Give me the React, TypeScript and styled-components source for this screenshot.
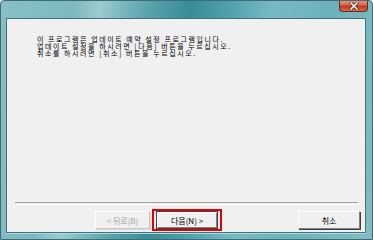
import React from "react";
import styled, { createGlobalStyle } from "styled-components";

const GlobalStyle = createGlobalStyle`
  html, body {
    margin: 0;
    padding: 0;
    background: #ffffff;
  }
`;

const Window = styled.div`
  width: 373px;
  height: 240px;
  box-sizing: border-box;
  display: flex;
  flex-direction: column;
  border: 1px solid #3f6c73;
  border-radius: 4px 4px 0 0;
  background: linear-gradient(
    100deg,
    #86c0c6 0%,
    #7db9c0 18%,
    #9ccbd0 24%,
    #5aa3ad 36%,
    #368c98 46%,
    #4d9fab 55%,
    #78bac3 66%,
    #6cb1ba 80%,
    #82bdc3 100%
  );
  overflow: hidden;
`;

const TitleBar = styled.div`
  height: 17px;
  display: flex;
  justify-content: flex-end;
  align-items: flex-start;
  padding-right: 4px;
`;

const CloseButton = styled.div`
  width: 29px;
  height: 12px;
  margin-top: -1px;
  box-sizing: border-box;
  border: 1px solid #6b2a1c;
  border-top: none;
  border-radius: 0 0 4px 4px;
  background: linear-gradient(#e9a08c 0%, #d8664a 45%, #c0381c 55%, #d86a48 100%);
  display: flex;
  align-items: center;
  justify-content: center;
`;

const Frame = styled.div`
  flex: 1;
  display: flex;
  padding: 0 6px 6px 5px;
`;

const Client = styled.div`
  flex: 1;
  display: flex;
  flex-direction: column;
  background: #f0f0f0;
  border: 1px solid #42727a;
  box-shadow: 0 1px 0 #a8dce2;
`;

const Message = styled.div`
  flex: 1;
  padding: 17px 0 0 30px;
  font-family: "Noto Sans CJK KR", "Liberation Sans", sans-serif;
  font-size: 7px;
  line-height: 7px;
  letter-spacing: 1.55px;
  color: #000000;
`;

const Line = styled.div`
  white-space: nowrap;
`;

const Separator = styled.div`
  margin: 0 7px 0 8px;
  height: 1px;
  border-top: 1px solid #a0a0a0;
  border-bottom: 1px solid #ffffff;
`;

const ButtonRow = styled.div`
  display: flex;
  justify-content: flex-end;
  align-items: center;
  gap: 2px;
  padding: 4px 5px 0 0;
  height: 22px;
  margin-bottom: 1px;
`;

const Button = styled.div<{ $disabled?: boolean; $default?: boolean; $width?: number }>`
  width: ${(p) => p.$width ?? 62}px;
  height: 18px;
  box-sizing: border-box;
  display: flex;
  align-items: center;
  justify-content: center;
  font-family: "Noto Sans CJK KR", "Liberation Sans", sans-serif;
  font-size: 8px;
  color: ${(p) => (p.$disabled ? "#a3a3a3" : "#000000")};
  background: #f0f0f0;
  border: 1px solid;
  border-color: ${(p) =>
    p.$disabled
      ? "#ffffff #c8c8c8 #c8c8c8 #ffffff"
      : p.$default
      ? "#404040 #404040 #404040 #404040"
      : "#ffffff #808080 #808080 #ffffff"};
  box-shadow: ${(p) =>
    p.$disabled
      ? "1px 1px 0 #d8d8d8"
      : p.$default
      ? "inset 1px 1px 0 #ffffff, inset -1px -1px 0 #808080"
      : "1px 1px 0 #404040"};
`;

const Highlight = styled.div`
  border: 2px solid #e60000;
  padding: 0 2px;
  display: flex;
`;

const CancelSlot = styled.div`
  margin-left: 74px;
  display: flex;
`;

export default function App() {
  return (
    <>
      <GlobalStyle />
      <Window>
        <TitleBar>
          <CloseButton>
            <svg width="10" height="8" viewBox="0 0 10 8">
              <path d="M2 1 L8 7 M8 1 L2 7" stroke="#5a1a10" strokeWidth="3" strokeLinecap="square" />
              <path d="M2 1 L8 7 M8 1 L2 7" stroke="#ffffff" strokeWidth="1.6" strokeLinecap="square" />
            </svg>
          </CloseButton>
        </TitleBar>
        <Frame>
          <Client>
            <Message>
              <Line>이 프로그램은 업데이트 예약 설정 프로그램입니다.</Line>
              <Line>업데이트 설정을 하시려면 [다음] 버튼을 누르십시오.</Line>
              <Line>취소를 하시려면 [취소] 버튼을 누르십시오.</Line>
            </Message>
            <Separator />
            <ButtonRow>
              <Button $disabled $width={55}>&lt; 뒤로(B)</Button>
              <Highlight>
                <Button $default>다음(N) &gt;</Button>
              </Highlight>
              <CancelSlot>
                <Button>취소</Button>
              </CancelSlot>
            </ButtonRow>
          </Client>
        </Frame>
      </Window>
    </>
  );
}
